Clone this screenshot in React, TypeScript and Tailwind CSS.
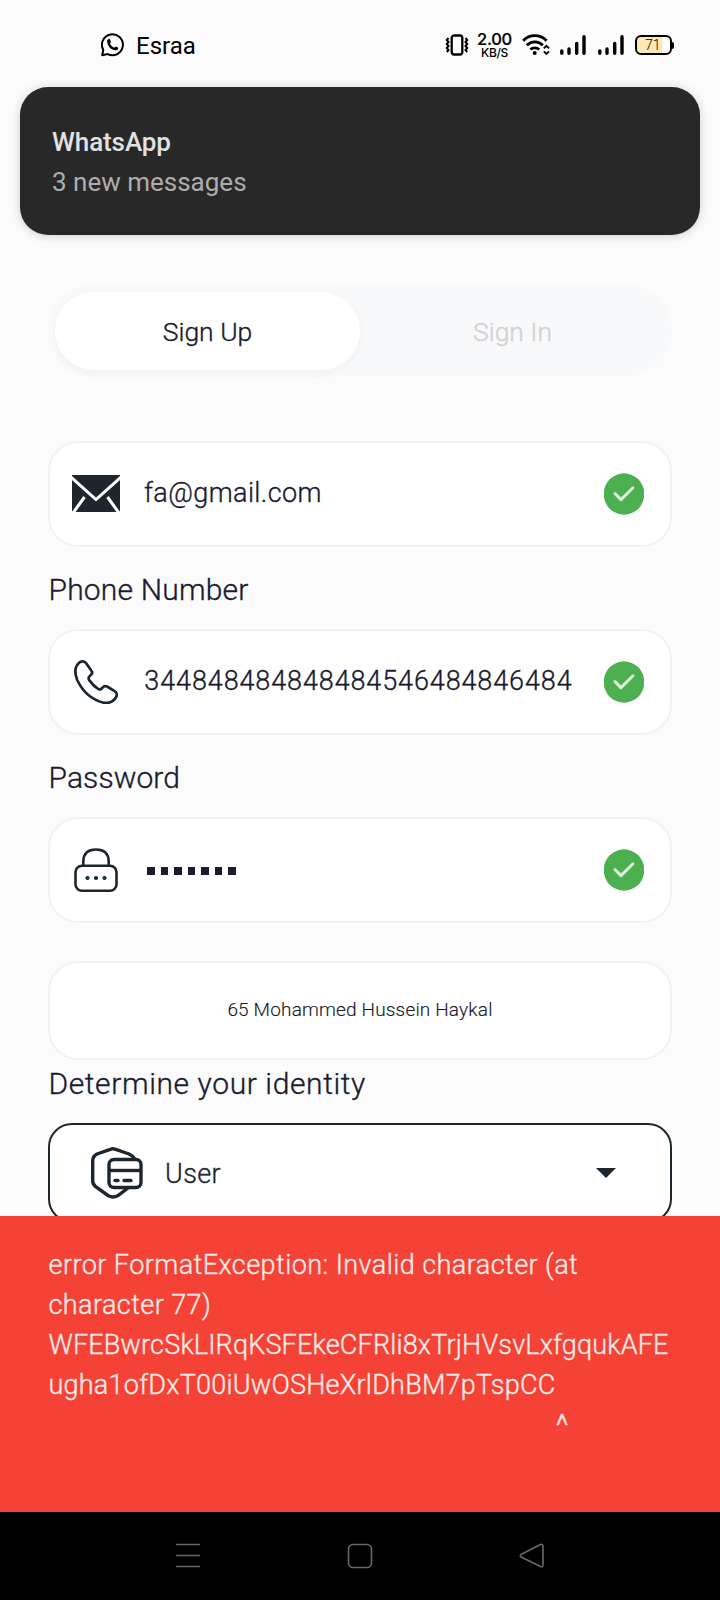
import React from "react";

type TextProps = { children: React.ReactNode; className: string };

function Label({ children, className }: TextProps) {
  return (
    <div className="flex h-[82px] items-center pt-[4px] pl-[0.5px]">
      <span className={"whitespace-pre text-[30px] font-light leading-9 text-[#1a1b2e] [-webkit-text-stroke:0.35px] " + className}>{children}</span>
    </div>
  );
}

function Check() {
  return (
    <svg className="h-[42px] w-10 shrink-0" viewBox="0 0 40 42">
      <ellipse cx="20" cy="21" rx="20.3" ry="20.7" fill="#4caf50" />
      <path d="M11 20.6L17 26.6L29 14.8" fill="none" stroke="#dcf3dc" strokeWidth="3" strokeLinecap="round" strokeLinejoin="round" />
    </svg>
  );
}

function Field({ icon, children }: { icon: React.ReactNode; children: React.ReactNode }) {
  return (
    <div className="flex h-[106px] items-center rounded-[30px] border-2 border-[#f2f2f2] bg-white pr-[26px] pl-5">
      <div className="flex w-[52px] shrink-0 justify-center">{icon}</div>
      <div className="ml-[21px] flex h-10 flex-1 items-center overflow-hidden">{children}</div>
      <Check />
    </div>
  );
}

function Signal() {
  return (
    <svg className="h-5 w-[26px]" viewBox="0 0 26 20" stroke="#000" strokeWidth="3.4" strokeLinecap="round">
      <path d="M1.8 16v2.3M9 14v4.3M16.7 8.5v9.8M24 1.7v16.6" />
    </svg>
  );
}

export default function App() {
  return (
    <div className="relative flex h-[1600px] w-[720px] flex-col overflow-hidden bg-[#fbfbfb] font-['Roboto','Liberation_Sans',sans-serif]">
      <header className="flex h-[87px] items-center pl-[101px] text-black">
        <svg className="mt-[2px] h-6 w-6" viewBox="0 0 24 24">
          <path d="M1.2 22.3L2.3 16.9A10.5 10.5 0 1 1 6.7 21.1Z" fill="none" stroke="#000" strokeWidth="2" strokeLinejoin="round" />
          <path d="M7 6.2L8.7 6L10 9L8.9 10.7Q10.4 13.5 13 14.8L14.8 13.5L17.4 14.8Q17.2 17.4 14.5 17.3Q7.4 16.5 6.1 8.7Q6.1 7 7 6.2Z" />
        </svg>
        <span className="ml-[11px] mt-[4px] text-2xl leading-7">Esraa</span>
        <div className="ml-auto mt-[3px] flex items-center pr-[46px]">
          <svg className="h-[22px] w-6" viewBox="0 0 24 22" fill="none" stroke="#000">
            <rect x="6.7" y="1.5" width="10.6" height="19" rx="2.5" strokeWidth="2.3" />
            <path d="M3.5 4L1.8 6L3.5 8L1.8 10L3.5 12L1.8 14L3.5 16L1.8 18M20.5 4L22.2 6L20.500 8L22.2 10L20.5 12L22.2 14L20.5 16L22.2 18" strokeWidth="2" />
          </svg>
          <div className="ml-[8px] flex w-[35px] flex-col items-center font-['Inter','Roboto',sans-serif]">
            <span className="h-[12px] whitespace-nowrap text-[16.5px] font-medium leading-[12px] tracking-[-0.3px] [-webkit-text-stroke:0.2px]">2.00</span>
            <span className="mt-[3px] h-[10px] whitespace-nowrap text-[12px] font-medium leading-[10px] tracking-[-0.3px]">KB/S</span>
          </div>
          <svg className="ml-[10px] h-[22px] w-7" viewBox="0 0 28 22" fill="none" stroke="#000">
            <path d="M1.2 6.7A16 16 0 0 1 24.5 6.7M4.8 11.3A11.2 11.2 0 0 1 20.8 11.3M8.4 15.6A6.4 6.4 0 0 1 17.2 15.6" strokeWidth="2.8" />
            <circle cx="12.7" cy="19" r="2" fill="#000" stroke="none" />
            <path d="M21.8 14.4L24.4 11.8L27 14.4M21.8 17.4L24.4 20L27 17.4" strokeWidth="1.9" />
          </svg>
          <div className="ml-[10px] flex gap-3"><Signal /><Signal /></div>
          <div className="ml-[11px] flex items-center">
            <div className="flex h-5 w-[37px] items-center rounded-md border-2 border-black bg-[linear-gradient(to_right,#fbe8b6_75%,#fffdf5_75%)]">
              <span className="ml-[8px] text-[14px] font-light leading-4">71</span>
            </div>
            <div className="h-[7px] w-[2px] rounded-r bg-black" />
          </div>
        </div>
      </header>

      <section className="mx-5 flex h-[148px] shrink-0 flex-col justify-center rounded-[28px] bg-[#282828] pl-8 pt-[2px] shadow-[0_1px_10px_rgba(0,0,0,0.18)]">
        <div className="text-[26px] font-medium leading-10 tracking-[-0.1px] text-[#e2e2e2]">WhatsApp</div>
        <div className="text-[26px] leading-10 text-[#adadad]">3 new messages</div>
      </section>

      <main className="flex flex-col px-12 pt-[49px]">
        <div className="flex h-[93px] items-center rounded-full bg-[#f8f9fb] px-[7px] text-[26.5px] font-light text-[#1a1b2e] [-webkit-text-stroke:0.35px]">
          <div className="flex h-[78px] w-[305px] items-center justify-center rounded-full bg-white pt-[3px] shadow-[0_3px_8px_rgba(30,40,60,0.04)]">
            <span>Sign Up</span>
          </div>
          <div className="flex flex-1 items-center justify-center pt-[3px] text-[#d2d2d2]"><span>Sign In</span></div>
        </div>

        <div className="mt-[63.5px]">
          <Field
            icon={
              <svg className="h-[37px] w-12" viewBox="0 0 48 37">
                <path d="M0 0H48V37H0Z" fill="#1d262d" />
                <path d="M-1 2L24 24.5L49 2M1 38L12.5 22M47 38L35.5 22" fill="none" stroke="#fff" strokeWidth="3" />
              </svg>
            }
          >
            <span className="pl-px text-[27px] font-light tracking-[0.4px] text-[#1a1b2e] [-webkit-text-stroke:0.35px]">fa@gmail.com</span>
          </Field>
        </div>
        <Label className="tracking-[0.2px]">Phone Number</Label>
        <Field
          icon={
            <svg className="h-11 w-11" viewBox="0 0 44 44" fill="none" stroke="#1d262d" strokeWidth="2.7" strokeLinejoin="round">
              <path d="M5.7 2.2Q9.2 .3 12 3L17.6 11Q19.2 13.3 16.3 15.5Q13.6 17.6 15.2 20.1Q19.5 26.2 24.5 29.1Q26.3 30.2 28.2 28Q30.2 25.4 33 26.5L40.7 31.2Q43.6 33 42.5 36.4Q38.5 44.2 29.5 42.7Q11.8 38.2 3.2 20Q-1.5 8 5.7 2.2Z" />
            </svg>
          }
        >
          <div className="flex w-[429.5px] justify-end overflow-hidden">
            <span className="whitespace-nowrap text-[27px] font-light tracking-[0.88px] text-[#1a1b2e] [-webkit-text-stroke:0.35px]">344848484848484546484846484</span>
          </div>
        </Field>
        <Label className="tracking-[0.1px]">Password</Label>
        <Field
          icon={
            <svg className="h-11 w-11" viewBox="0 0 44 44" fill="none" stroke="#1d262d" strokeWidth="2.6">
              <rect x="1.5" y="17.7" width="41" height="25" rx="6.5" />
              <path d="M9.3 17.7V13Q9.8 1.5 22 1.5Q34.2 1.5 34.7 13V17.7" />
              <path d="M13.5 30h.01M22 30h.01M30.5 30h.01" strokeWidth="4.2" strokeLinecap="round" />
            </svg>
          }
        >
          <div className="flex gap-[6px] pt-[2px] pl-1">
            {[0, 1, 2, 3, 4, 5, 6].map((i) => (
              <span key={i} className="h-2 w-[7.5px] bg-[#1a1b2e]" />
            ))}
          </div>
        </Field>

        <div className="mt-[38px] flex h-[99px] items-center justify-center rounded-[30px] border-2 border-[#f2f2f2] bg-white">
          <span className="pt-px text-[19px] font-light tracking-[0.17px] text-[#1a1b2e] [-webkit-text-stroke:0.15px]">65 Mohammed Hussein Haykal</span>
        </div>
        <div className="-mt-[19px]"><Label className="tracking-[0.6px]">Determine your identity</Label></div>
        <div className="flex h-[100px] items-center rounded-[24px] border-2 border-[#1d262d] bg-white pr-[54px] pl-[41px]">
          <svg className="h-[52px] w-[52px]" viewBox="0 0 52 52" fill="none" stroke="#1d262d" strokeWidth="3.4">
            <path d="M43.5 11.5Q42 9 38 7L24 2.2Q22 1.4 20 2.2L6 7Q1.7 9 1.7 14V34Q1.7 37.5 5 40L17 48.5Q22 51.5 27 48.5L37 41" />
            <rect x="18" y="12.5" width="32" height="28" rx="5" />
            <path d="M18 23.5h32" />
            <path d="M24 33.5h3M33 33.5h7" strokeLinecap="round" />
          </svg>
          <span className="ml-[22px] mt-[4px] text-[27px] font-light tracking-[0.4px] text-[#1d262d] [-webkit-text-stroke:0.35px]">User</span>
          <svg className="mt-px ml-auto h-[10px] w-5" viewBox="0 0 20 10"><path d="M0 0H20L10 10Z" fill="#1d262d" /></svg>
        </div>
      </main>

      <footer className="absolute inset-x-0 bottom-0 flex h-[384px] flex-col">
        <div className="h-[296px] bg-[#f44336] pt-[29px] pl-[48.5px] text-[27px] font-light leading-10 text-[#ffebe9] [-webkit-text-stroke:0.35px]">
          <div className="whitespace-pre tracking-[0.44px]"><span>error FormatException: Invalid character (at</span></div>
          <div className="whitespace-pre tracking-[0.42px]"><span>character 77)</span></div>
          <div className="whitespace-pre tracking-[0.18px]"><span>WFEBwrcSkLIRqKSFEkeCFRli8xTrjHVsvLxfgqukAFE</span></div>
          <div className="whitespace-pre tracking-[0.24px]"><span>ugha1ofDxT00iUwOSHeXrlDhBM7pTspCC</span></div>
          <div className="pl-[507px] text-[32px]">^</div>
        </div>
        <nav className="flex h-[88px] items-center justify-between bg-black px-[175px]">
          <svg className="h-[26px] w-[26px]" viewBox="0 0 26 26" stroke="#686868" strokeWidth="1.6"><path d="M1 1.5H25M1 12.5H25M1 23.5H25" /></svg>
          <svg className="h-[26px] w-[26px]" viewBox="0 0 26 26" fill="none" stroke="#686868" strokeWidth="1.6"><rect x="1.5" y="1.5" width="23" height="23" rx="4.5" /></svg>
          <svg className="h-[26px] w-[26px]" viewBox="0 0 26 26" fill="none" stroke="#686868" strokeWidth="1.6"><path d="M2 11.5L21.5 1.5Q24 .8 24 3.5V21.5Q24 24.5 21.5 23.5L2 14Q.5 12.8 2 11.5Z" /></svg>
        </nav>
      </footer>
    </div>
  );
}
